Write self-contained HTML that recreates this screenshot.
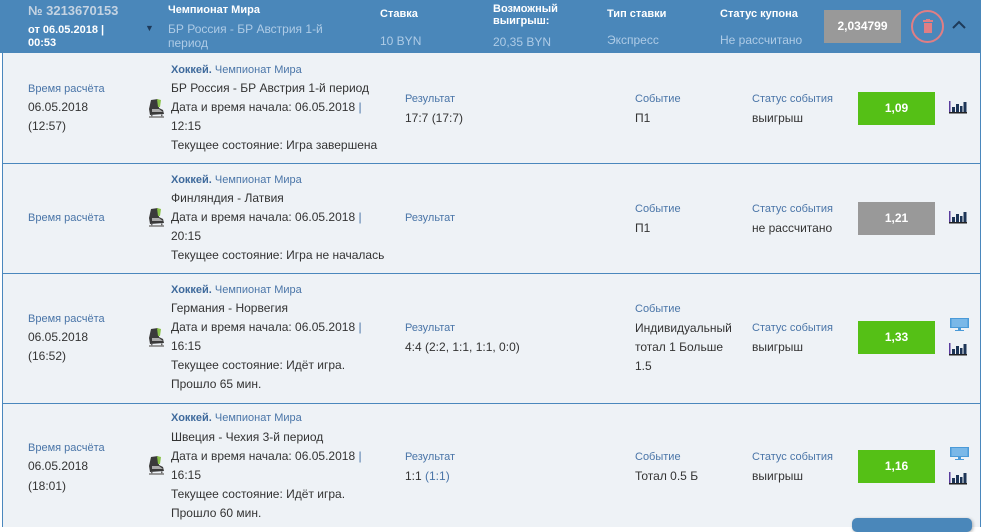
<!DOCTYPE html>
<html><head><meta charset="utf-8"><style>
*{margin:0;padding:0;box-sizing:border-box}
body{width:990px;height:527px;overflow:hidden;background:#fff;font-family:"Liberation Sans","DejaVu Sans",sans-serif;position:relative}
.t{position:absolute;white-space:nowrap;font-size:12px;line-height:16px;color:#333}
.l{color:#4a75a8;font-size:11px}
.h{color:#fff;font-weight:bold;font-size:11px}
.hv{color:#aecbe6;font-size:12px}
.b{font-weight:bold;color:#3f6a9c;font-size:11px}
.odd{position:absolute;width:77px;height:33px;color:#fff;font-weight:bold;font-size:12px;text-align:center;line-height:33px}
.g{background:#55c016}.gr{background:#999}
.sep{position:absolute;left:2px;width:978px;height:1px;background:#4a87bd}
</style></head><body>
<div style="position:absolute;left:2px;top:0;width:979px;height:527px;background:#eef2f6;border-left:1px solid #4a87bd;border-right:1px solid #4a87bd"></div>
<div style="position:absolute;left:0;top:0;width:981px;height:53px;background:#4a87ba"></div>
<div class="t" style="left:28px;top:3px;font-size:13px;font-weight:bold;color:#c4d3e2">№ 3213670153</div>
<div class="t h" style="left:28px;top:22px">от 06.05.2018 |</div>
<div class="t h" style="left:28px;top:35px">00:53</div>
<div class="t" style="left:145px;top:20px;font-size:9px;color:#1e3a5a">▼</div>
<div class="t h" style="left:168px;top:2px">Чемпионат Мира</div>
<div class="t hv" style="left:168px;top:21px">БР Россия - БР Австрия 1-й</div>
<div class="t hv" style="left:168px;top:35px">период</div>
<div class="t h" style="left:380px;top:6px">Ставка</div>
<div class="t hv" style="left:380px;top:33px">10 BYN</div>
<div class="t h" style="left:493px;top:1px">Возможный</div>
<div class="t h" style="left:493px;top:13px">выигрыш:</div>
<div class="t hv" style="left:493px;top:34px">20,35 BYN</div>
<div class="t h" style="left:607px;top:6px">Тип ставки</div>
<div class="t hv" style="left:607px;top:32px">Экспресс</div>
<div class="t h" style="left:720px;top:6px">Статус купона</div>
<div class="t hv" style="left:720px;top:32px">Не рассчитано</div>
<div class="odd gr" style="left:824px;top:10px;height:33px;width:77px">2,034799</div>
<div style="position:absolute;left:911px;top:10px;width:33px;height:33px;border:2px solid #e07e84;border-radius:50%"></div>
<svg style="position:absolute;left:922px;top:19px" width="12" height="14" viewBox="0 0 12 14"><rect x="1" y="1" width="10" height="2" fill="#e07e84"/><rect x="4" y="0" width="4" height="2" fill="#e07e84"/><rect x="2" y="4" width="8" height="10" fill="#e07e84"/></svg>
<svg style="position:absolute;left:952px;top:20px" width="14" height="10"><path d="M1 8 L7 2 L13 8" stroke="#1e3a5a" stroke-width="2" fill="none"/></svg>

<div class="sep" style="top:163px"></div>
<div class="sep" style="top:273px"></div>
<div class="sep" style="top:403px"></div>

<!-- row1 -->
<div class="t l" style="left:28px;top:81px">Время расчёта</div>
<div class="t" style="left:28px;top:99px">06.05.2018</div>
<div class="t" style="left:28px;top:118px">(12:57)</div>
<div class="t b" style="left:171px;top:62px">Хоккей. <span style="font-weight:normal;color:#4a75a8">Чемпионат Мира</span></div>
<div class="t" style="left:171px;top:80px">БР Россия - БР Австрия 1-й период</div>
<div class="t" style="left:171px;top:99px">Дата и время начала: 06.05.2018 <span style="color:#4a75a8">|</span></div>
<div class="t" style="left:171px;top:118px">12:15</div>
<div class="t" style="left:171px;top:137px">Текущее состояние: Игра завершена</div>
<div class="t l" style="left:405px;top:91px">Результат</div>
<div class="t" style="left:405px;top:110px">17:7 (17:7)</div>
<div class="t l" style="left:635px;top:91px">Событие</div>
<div class="t" style="left:635px;top:110px">П1</div>
<div class="t l" style="left:752px;top:91px">Статус события</div>
<div class="t" style="left:752px;top:110px">выигрыш</div>
<div class="odd g" style="left:858px;top:92px">1,09</div>

<!-- row2 -->
<div class="t l" style="left:28px;top:210px">Время расчёта</div>
<div class="t b" style="left:171px;top:172px">Хоккей. <span style="font-weight:normal;color:#4a75a8">Чемпионат Мира</span></div>
<div class="t" style="left:171px;top:190px">Финляндия - Латвия</div>
<div class="t" style="left:171px;top:209px">Дата и время начала: 06.05.2018 <span style="color:#4a75a8">|</span></div>
<div class="t" style="left:171px;top:228px">20:15</div>
<div class="t" style="left:171px;top:247px">Текущее состояние: Игра не началась</div>
<div class="t l" style="left:405px;top:210px">Результат</div>
<div class="t l" style="left:635px;top:201px">Событие</div>
<div class="t" style="left:635px;top:220px">П1</div>
<div class="t l" style="left:752px;top:201px">Статус события</div>
<div class="t" style="left:752px;top:220px">не рассчитано</div>
<div class="odd gr" style="left:858px;top:202px">1,21</div>

<!-- row3 -->
<div class="t l" style="left:28px;top:311px">Время расчёта</div>
<div class="t" style="left:28px;top:329px">06.05.2018</div>
<div class="t" style="left:28px;top:348px">(16:52)</div>
<div class="t b" style="left:171px;top:282px">Хоккей. <span style="font-weight:normal;color:#4a75a8">Чемпионат Мира</span></div>
<div class="t" style="left:171px;top:300px">Германия - Норвегия</div>
<div class="t" style="left:171px;top:319px">Дата и время начала: 06.05.2018 <span style="color:#4a75a8">|</span></div>
<div class="t" style="left:171px;top:338px">16:15</div>
<div class="t" style="left:171px;top:357px">Текущее состояние: Идёт игра.</div>
<div class="t" style="left:171px;top:376px">Прошло 65 мин.</div>
<div class="t l" style="left:405px;top:320px">Результат</div>
<div class="t" style="left:405px;top:339px">4:4 (2:2, 1:1, 1:1, 0:0)</div>
<div class="t l" style="left:635px;top:301px">Событие</div>
<div class="t" style="left:635px;top:320px">Индивидуальный</div>
<div class="t" style="left:635px;top:339px">тотал 1 Больше</div>
<div class="t" style="left:635px;top:358px">1.5</div>
<div class="t l" style="left:752px;top:320px">Статус события</div>
<div class="t" style="left:752px;top:339px">выигрыш</div>
<div class="odd g" style="left:858px;top:321px">1,33</div>

<!-- row4 -->
<div class="t l" style="left:28px;top:440px">Время расчёта</div>
<div class="t" style="left:28px;top:458px">06.05.2018</div>
<div class="t" style="left:28px;top:478px">(18:01)</div>
<div class="t b" style="left:171px;top:410px">Хоккей. <span style="font-weight:normal;color:#4a75a8">Чемпионат Мира</span></div>
<div class="t" style="left:171px;top:429px">Швеция - Чехия 3-й период</div>
<div class="t" style="left:171px;top:448px">Дата и время начала: 06.05.2018 <span style="color:#4a75a8">|</span></div>
<div class="t" style="left:171px;top:467px">16:15</div>
<div class="t" style="left:171px;top:486px">Текущее состояние: Идёт игра.</div>
<div class="t" style="left:171px;top:505px">Прошло 60 мин.</div>
<div class="t l" style="left:405px;top:449px">Результат</div>
<div class="t" style="left:405px;top:468px">1:1 <span style="color:#4a75a8">(1:1)</span></div>
<div class="t l" style="left:635px;top:449px">Событие</div>
<div class="t" style="left:635px;top:468px">Тотал 0.5 Б</div>
<div class="t l" style="left:752px;top:449px">Статус события</div>
<div class="t" style="left:752px;top:468px">выигрыш</div>
<div class="odd g" style="left:858px;top:450px">1,16</div>

<svg width="0" height="0" style="position:absolute"><defs>
<g id="sk"><path d="M5 1 L12 0 L13 9 L17 11 L18 15 L4 16 L3 10 Z" fill="#3a3a3a"/><path d="M11 0 L15 1 L14 8 L12 8 Z" fill="#8bc34a"/><path d="M6 10 L13 10 L17 13 L6 13Z" fill="#aaa"/><rect x="3" y="17" width="15" height="2" fill="#999"/><rect x="5" y="15.5" width="1.5" height="2" fill="#666"/><rect x="15" y="15.5" width="1.5" height="2" fill="#666"/></g>
<g id="ch"><rect x="0" y="0" width="1.5" height="12" fill="#5a3c9e"/><rect x="0" y="11" width="18" height="1.5" fill="#222"/><rect x="3" y="6" width="3" height="5" fill="#1d3557"/><rect x="7" y="3" width="3" height="8" fill="#1d3557"/><rect x="11" y="5" width="2.5" height="6" fill="#1d3557"/><rect x="14.5" y="1" width="3" height="10" fill="#1d3557"/></g>
<g id="mo"><rect x="0" y="0" width="19" height="10" fill="#4a9ad8"/><rect x="1.5" y="1" width="16" height="8" fill="#7ab8e8"/><rect x="8" y="10" width="3" height="2" fill="#4a9ad8"/><rect x="5" y="12" width="9" height="1" fill="#4a9ad8"/></g>
</defs></svg>
<svg style="position:absolute;left:146px;top:99px" width="20" height="20"><use href="#sk"/></svg>
<svg style="position:absolute;left:146px;top:208px" width="20" height="20"><use href="#sk"/></svg>
<svg style="position:absolute;left:146px;top:328px" width="20" height="20"><use href="#sk"/></svg>
<svg style="position:absolute;left:146px;top:456px" width="20" height="20"><use href="#sk"/></svg>
<svg style="position:absolute;left:949px;top:101px" width="19" height="13"><use href="#ch"/></svg>
<svg style="position:absolute;left:949px;top:211px" width="19" height="13"><use href="#ch"/></svg>
<svg style="position:absolute;left:949px;top:343px" width="19" height="13"><use href="#ch"/></svg>
<svg style="position:absolute;left:949px;top:472px" width="19" height="13"><use href="#ch"/></svg>
<svg style="position:absolute;left:950px;top:318px" width="19" height="13"><use href="#mo"/></svg>
<svg style="position:absolute;left:950px;top:447px" width="19" height="13"><use href="#mo"/></svg>
<div style="position:absolute;left:852px;top:518px;width:120px;height:14px;background:#4a87ba;border-radius:5px;box-shadow:1px 1px 3px rgba(0,0,0,.3)"></div>
</body></html>
